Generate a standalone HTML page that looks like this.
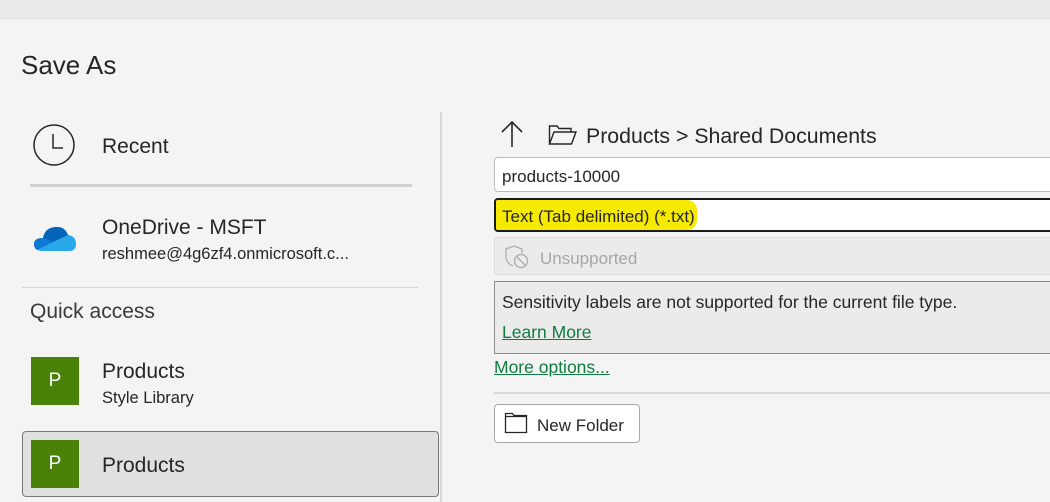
<!DOCTYPE html>
<html><head><meta charset="utf-8"><style>
*{margin:0;padding:0;box-sizing:border-box}
body{width:1050px;height:502px;overflow:hidden;background:#f4f4f4;font-family:"Segoe UI","Liberation Sans",sans-serif;color:#262626;position:relative}
.a{position:absolute;white-space:nowrap}
.tile{position:absolute;width:48px;height:48px;background:#4a8108;color:#fff;font-size:19px;text-align:center;line-height:48px}
</style></head><body>
<div class="a" style="left:0;top:0;width:1050px;height:19px;background:#ebebed;border-bottom:1px solid #e0e0e0"></div>
<div class="a" style="left:21px;top:50px;font-size:26px">Save As</div>

<svg class="a" style="left:33px;top:124px" width="44" height="44" viewBox="0 0 44 44"><circle cx="21" cy="21" r="20" fill="none" stroke="#262626" stroke-width="1.5"/><path d="M20 10V24H30" fill="none" stroke="#262626" stroke-width="1.5"/></svg>
<div class="a" style="left:102px;top:135px;font-size:21px">Recent</div>
<div class="a" style="left:30px;top:184px;width:382px;height:3px;background:#d0d0d0"></div>

<svg class="a" style="left:33px;top:224px" width="44" height="30" viewBox="0 0 44 30"><path d="M10 14 Q12 3 24 3 Q32 3 35 11 Q43 12 43 20 Q43 27 36 27 H10 Q1 27 1 20 Q1 14 10 14Z" fill="#28a8ea"/><path d="M10 14 Q12 3 24 3 Q32 3 35 11 L20 18 Z" fill="#0364b8"/><path d="M1 20 Q1 14 10 14 L20 18 L4 26 Q1 24 1 20Z" fill="#0f78d4"/></svg>
<div class="a" style="left:102px;top:216px;font-size:21px">OneDrive - MSFT</div>
<div class="a" style="left:102px;top:245px;font-size:16.5px">reshmee@4g6zf4.onmicrosoft.c...</div>
<div class="a" style="left:22px;top:287px;width:396px;height:1px;background:#d6d6d6"></div>

<div class="a" style="left:30px;top:300px;font-size:21px;color:#3a3a3a">Quick access</div>
<div class="tile" style="left:31px;top:357px">P</div>
<div class="a" style="left:102px;top:360px;font-size:21px">Products</div>
<div class="a" style="left:102px;top:389px;font-size:16.5px">Style Library</div>
<div class="a" style="left:22px;top:431px;width:417px;height:66px;background:#e0e0e0;border:1px solid #7a7a7a;border-radius:4px"></div>
<div class="tile" style="left:31px;top:440px">P</div>
<div class="a" style="left:102px;top:454px;font-size:21px">Products</div>

<div class="a" style="left:440px;top:112px;width:2px;height:390px;background:#d8d8d8"></div>

<svg class="a" style="left:500px;top:120px" width="24" height="28" viewBox="0 0 24 28"><path d="M12 2V27M2 12L12 2L22 12" fill="none" stroke="#262626" stroke-width="1.6"/></svg>
<svg class="a" style="left:548px;top:124px" width="30" height="22" viewBox="0 0 30 22"><path d="M1.5 20V2H9L11 4.5H23V8M1.5 20L6 8H28L23.5 20Z" fill="none" stroke="#262626" stroke-width="1.4"/></svg>
<div class="a" style="left:586px;top:124px;font-size:21.3px">Products &gt; Shared Documents</div>

<div class="a" style="left:494px;top:157px;width:570px;height:35px;background:#fff;border:1px solid #bcbcbc;border-radius:4px"></div>
<div class="a" style="left:502px;top:167px;font-size:17px">products-10000</div>
<div class="a" style="left:494px;top:198px;width:570px;height:34px;background:#fff;border:2px solid #1a1a1a;border-radius:4px"></div>
<div class="a" style="left:496px;top:200px;width:201px;height:30px;background:#f5ea00;border-radius:2px 10px 10px 2px"></div>
<div class="a" style="left:502px;top:207px;font-size:17px">Text (Tab delimited) (*.txt)</div>
<div class="a" style="left:494px;top:237px;width:570px;height:38px;background:#ebebeb;border:1px solid #dcdcdc;border-radius:4px"></div>
<svg class="a" style="left:504px;top:244px" width="26" height="26" viewBox="0 0 26 26"><path d="M10 2L2 5V12Q2 19 9 22" fill="none" stroke="#b0b0b0" stroke-width="1.4"/><path d="M10 2L18 5V9" fill="none" stroke="#b0b0b0" stroke-width="1.4"/><circle cx="17" cy="17" r="6.5" fill="none" stroke="#b0b0b0" stroke-width="1.4"/><path d="M12.5 12.5L21.5 21.5" stroke="#b0b0b0" stroke-width="1.4"/></svg>
<div class="a" style="left:540px;top:249px;font-size:17px;color:#a6a6a6">Unsupported</div>
<div class="a" style="left:494px;top:281px;width:570px;height:73px;background:#ebebeb;border:1px solid #8a8a8a"></div>
<div class="a" style="left:502px;top:292px;font-size:17.5px">Sensitivity labels are not supported for the current file type.</div>
<div class="a" style="left:502px;top:322px;font-size:17.5px;color:#107c41;text-decoration:underline">Learn More</div>
<div class="a" style="left:494px;top:357px;font-size:17.5px;color:#107c41;text-decoration:underline">More options...</div>
<div class="a" style="left:494px;top:392px;width:570px;height:2px;background:#d8d8d8"></div>
<div class="a" style="left:494px;top:404px;width:146px;height:39px;background:#fff;border:1px solid #a8a8a8;border-radius:4px"></div>
<svg class="a" style="left:504px;top:412px" width="24" height="22" viewBox="0 0 24 22"><path d="M1.5 20.5V1.5H8.5L10 3.5H22.5V20.5Z M1.5 4.5H22.5" fill="none" stroke="#262626" stroke-width="1.3"/></svg>
<div class="a" style="left:537px;top:416px;font-size:17px">New Folder</div>
</body></html>
